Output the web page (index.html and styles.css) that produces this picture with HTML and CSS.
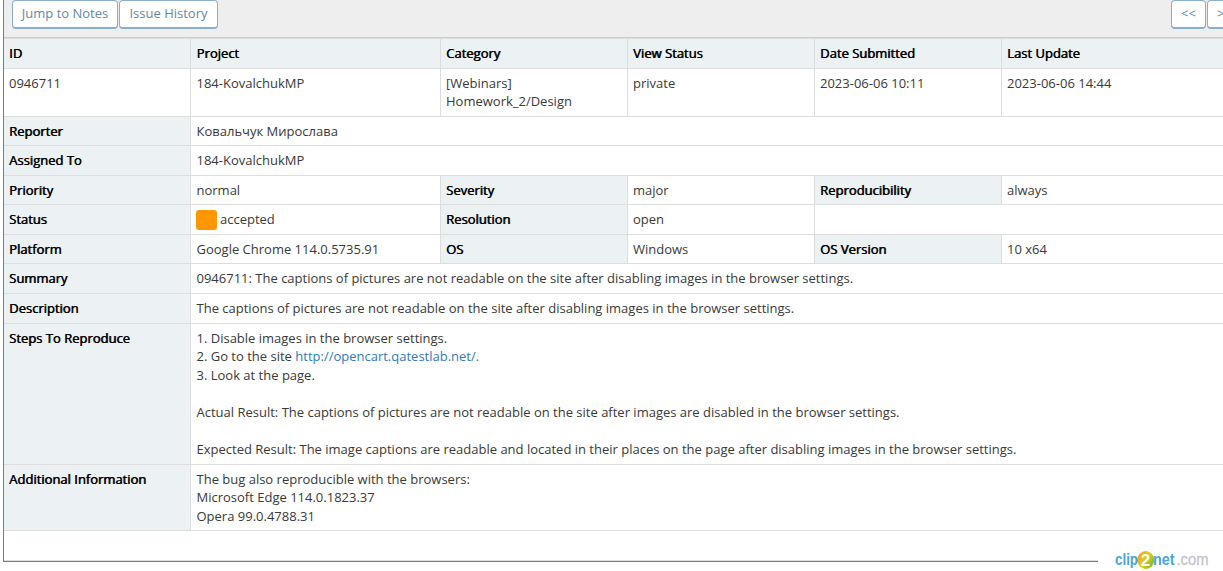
FILE: index.html
```
<!DOCTYPE html>
<html lang="en">
<head>
<meta charset="utf-8">
<title>0946711: Issue details</title>
<link rel="stylesheet" href="styles.css">
</head>
<body>
<main class="panel">
  <div class="toolbar">
    <a class="btn btn-jump">Jump to Notes</a>
    <a class="btn btn-history">Issue History</a>
    <a class="btn btn-prev">&lt;&lt;</a>
    <a class="btn btn-next">&gt;&gt;</a>
  </div>
  <div class="details">
    <div class="cell label">ID</div>
    <div class="cell label second">Project</div>
    <div class="cell label">Category</div>
    <div class="cell label">View Status</div>
    <div class="cell label">Date Submitted</div>
    <div class="cell label last">Last Update</div>

    <div class="cell">0946711</div>
    <div class="cell second">184-KovalchukMP</div>
    <div class="cell">[Webinars] Homework_2/Design</div>
    <div class="cell">private</div>
    <div class="cell">2023-06-06 10:11</div>
    <div class="cell last">2023-06-06 14:44</div>

    <div class="cell label">Reporter</div>
    <div class="cell second wide">Ковальчук Мирослава</div>

    <div class="cell label">Assigned To</div>
    <div class="cell second wide">184-KovalchukMP</div>

    <div class="cell label">Priority</div>
    <div class="cell second">normal</div>
    <div class="cell label">Severity</div>
    <div class="cell">major</div>
    <div class="cell label">Reproducibility</div>
    <div class="cell last">always</div>

    <div class="cell label">Status</div>
    <div class="cell status"><span class="swatch"></span>accepted</div>
    <div class="cell label">Resolution</div>
    <div class="cell">open</div>
    <div class="cell rest"></div>

    <div class="cell label">Platform</div>
    <div class="cell second">Google Chrome 114.0.5735.91</div>
    <div class="cell label">OS</div>
    <div class="cell">Windows</div>
    <div class="cell label">OS Version</div>
    <div class="cell last">10 x64</div>

    <div class="cell label">Summary</div>
    <div class="cell second wide">0946711: The captions of pictures are not readable on the site after disabling images in the browser settings.</div>

    <div class="cell label">Description</div>
    <div class="cell second wide">The captions of pictures are not readable on the site after disabling images in the browser settings.</div>

    <div class="cell label">Steps To Reproduce</div>
    <div class="cell second wide">1. Disable images in the browser settings.<br>2. Go to the site <a class="link">http://opencart.qatestlab.net/.</a><br>3. Look at the page.<br><br>Actual Result: The captions of pictures are not readable on the site after images are disabled in the browser settings.<br><br>Expected Result: The image captions are readable and located in their places on the page after disabling images in the browser settings.</div>

    <div class="cell label">Additional Information</div>
    <div class="cell second wide">The bug also reproducible with the browsers:<br>Microsoft Edge 114.0.1823.37<br>Opera 99.0.4788.31</div>
  </div>
</main>
<div class="watermark">
  <svg width="96" height="20" viewBox="0 0 96 20">
    <defs>
      <linearGradient id="ball" x1="0" y1="0.2" x2="1" y2="0.8">
        <stop offset="0" stop-color="#ff9d1c"/>
        <stop offset="0.5" stop-color="#e0cf1c"/>
        <stop offset="1" stop-color="#63bd20"/>
      </linearGradient>
    </defs>
    <ellipse cx="30.7" cy="10" rx="8.5" ry="9" fill="url(#ball)"/>
    <text class="logo-name" x="0" y="15" textLength="23" lengthAdjust="spacingAndGlyphs">clip</text>
    <text class="logo-two" x="25.7" y="15.7">2</text>
    <text class="logo-name" x="38" y="15" textLength="21.5" lengthAdjust="spacingAndGlyphs">net</text>
    <text class="logo-com" x="61.5" y="15" textLength="32" lengthAdjust="spacingAndGlyphs">.com</text>
  </svg>
</div>
</body>
</html>
```
FILE: styles.css
```
body {
  margin: 0;
  background: #fff;
  color: #393939;
  font: 13px/18.5px "Open Sans", sans-serif;
  overflow: hidden;
}

.panel {
  box-sizing: border-box;
  height: 562px;
  margin-left: 3px;
  border-left: 1px solid #4f89ae;
  border-bottom: 1px solid #4f89ae;
  box-shadow: inset 0 -1px #ddd;
}

.toolbar {
  box-sizing: border-box;
  display: flex;
  height: 38px;
  padding-left: 8px;
  background: #eee;
  border-bottom: 1px solid #ccc;
}

.btn {
  box-sizing: border-box;
  flex: none;
  height: 29px;
  border: 1px solid #8aafce;
  border-bottom-width: 2px;
  border-radius: 4px;
  background: #fff;
  color: #6688a6;
  line-height: 25px;
  text-align: center;
  white-space: nowrap;
}

.btn-jump { width: 106px; margin-right: 1px; }
.btn-history { width: 99px; }
.btn-prev { width: 35px; margin-left: auto; margin-right: 1px; }
.btn-next { width: 35px; margin-right: -19px; }

.details {
  display: grid;
  grid-template-columns: 187px 250px 187px 187px 187px 1fr;
  grid-template-rows: 30px 48px 29px 30px 29px 30px 29px 30px 30px 141px 66px;
  border-top: 1px solid #ddd;
}

.cell {
  padding: 4.8px 5px 5px;
  border-right: 1px solid #ddd;
  border-bottom: 1px solid #ddd;
}

.label {
  background: #ecf2f4;
  color: #000;
  text-shadow: 0.6px 0 #000;
}

.second { padding-left: 5.5px; }
.wide { grid-column: span 5; border-right: 0; }
.rest { grid-column: span 2; border-right: 0; }
.last { border-right: 0; }

.status {
  display: flex;
  gap: 3px;
}

.swatch {
  width: 21px;
  height: 20px;
  margin-top: 0.2px;
  border-radius: 3px;
  background: #ff9800;
}

.link { color: #337ab7; }

.watermark {
  position: absolute;
  top: 550px;
  right: 0;
  width: 125px;
  height: 21px;
  box-sizing: border-box;
  padding-left: 17px;
  background: #fff;
}

.logo-name, .logo-two, .logo-com {
  font-family: "Liberation Sans", sans-serif;
  font-size: 16px;
}

.logo-name { fill: #47a5e0; font-weight: bold; }
.logo-two { fill: #fff; font-weight: bold; font-size: 17px; }
.logo-com { fill: #c5c5cc; stroke: #c5c5cc; stroke-width: 0.3px; }
```
